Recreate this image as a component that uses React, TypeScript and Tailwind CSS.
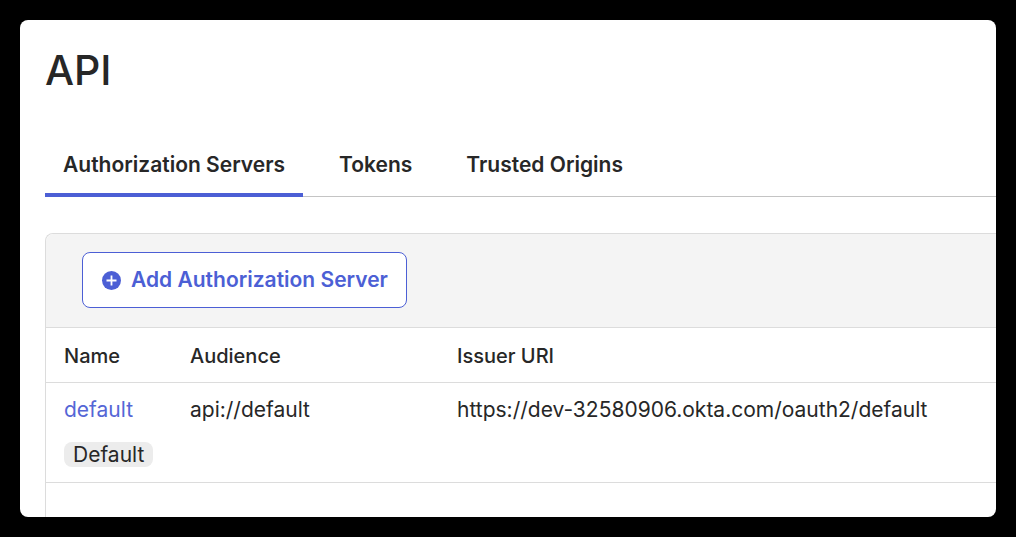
const tabs = ["Authorization Servers", "Tokens", "Trusted Origins"];

const servers = [
  {
    name: "default",
    badge: "Default",
    audience: "api://default",
    issuer: "https://dev-32580906.okta.com/oauth2/default",
  },
];

function PlusCircle() {
  return (
    <svg viewBox="0 0 20 20" className="size-5" aria-hidden="true">
      <circle cx="10.5" cy="10.5" r="9.5" fill="#4c5fd5" />
      <path d="M10.5 5.5v10M5.5 10.5h10" stroke="#fff" strokeWidth="1.8" />
    </svg>
  );
}

export default function App() {
  return (
    <div className="flex h-screen flex-col bg-black p-5 font-['Inter',sans-serif] text-[#272727]">
      <main className="flex-1 overflow-hidden rounded-lg bg-white pt-[25px] pl-[25px]">
        <h1 className="text-[41px] leading-[50px] font-medium">API</h1>
        <nav className="mt-[37px] flex gap-[18px] border-b border-[#c4c4c4]">
          {tabs.map((tab, i) => (
            <a
              key={tab}
              href="#"
              className={
                i === 0
                  ? "-mb-px border-b-4 border-[#4c5fd5] px-[18px] pt-[18px] pb-[13px] text-[21px] leading-[30px] font-semibold"
                  : "px-[18px] pt-[18px] pb-[13px] text-[21px] leading-[30px] font-semibold"
              }
            >
              {tab}
            </a>
          ))}
        </nav>
        <section className="mt-9 rounded-tl-lg border-t border-l border-[#dcdcdc]">
          <div className="rounded-tl-lg bg-[#f4f4f4] px-9 pt-[18px] pb-[19px]">
            <button className="flex h-14 items-center gap-[10px] rounded-lg border border-[#4c5fd5] bg-white px-[18px] text-[21px] font-semibold text-[#4c5fd5]">
              <PlusCircle />
              Add Authorization Server
            </button>
          </div>
          <table className="w-full table-fixed text-left text-[21px] leading-[30px]">
            <thead>
              <tr className="h-[55px] border-y border-[#dcdcdc] text-[20px]">
                <th className="w-36 pt-[2px] pl-[18px] font-medium">Name</th>
                <th className="w-[267px] pt-[2px] font-medium">Audience</th>
                <th className="pt-[2px] font-medium">Issuer URI</th>
              </tr>
            </thead>
            <tbody>
              {servers.map((s) => (
                <tr key={s.name} className="h-[100px] border-b border-[#dcdcdc] align-top">
                  <td className="pt-3 pl-[18px]">
                    <a href="#" className="block text-[#5566d6]">
                      {s.name}
                    </a>
                    <span className="mt-[17px] inline-block rounded-lg bg-[#ececec] px-[9px] leading-[25px]">
                      {s.badge}
                    </span>
                  </td>
                  <td className="pt-3">{s.audience}</td>
                  <td className="pt-3">{s.issuer}</td>
                </tr>
              ))}
            </tbody>
          </table>
          <div className="h-20" />
        </section>
      </main>
    </div>
  );
}
